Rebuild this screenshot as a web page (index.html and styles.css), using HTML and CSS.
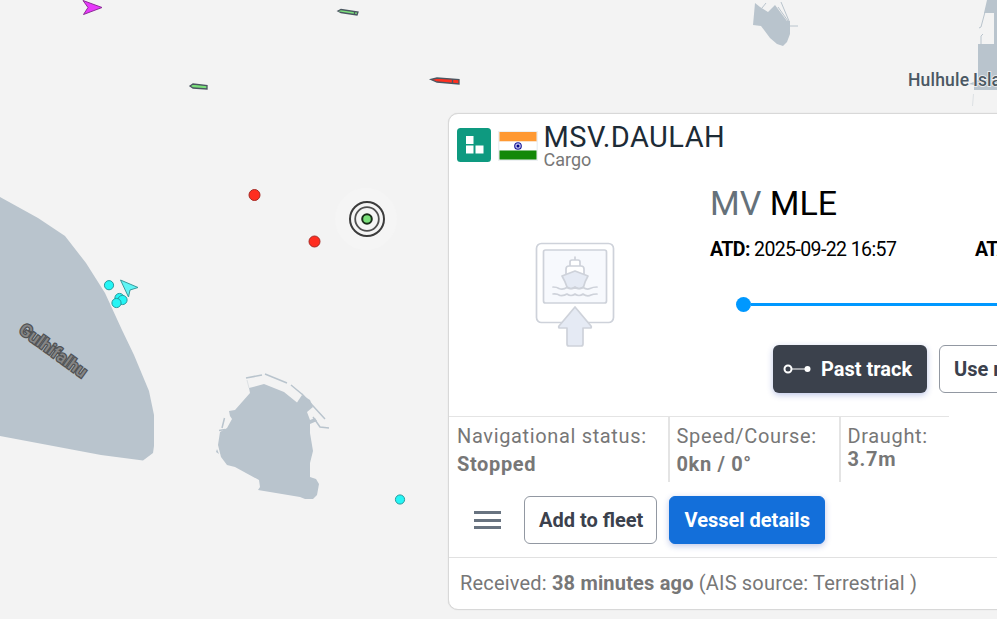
FILE: index.html
```
<!DOCTYPE html>
<html lang="en">
<head>
  <meta charset="utf-8">
  <title>MSV.DAULAH</title>
  <link rel="stylesheet" href="styles.css">
</head>
<body>

  <svg class="map" width="997" height="619" viewBox="0 0 997 619">
    <!-- land -->
    <g class="land">
      <path d="M0 197L38 218L65 236L86 263L105 293L122 330L134 355L149 391L154 415V446L153 453L143 460.500L101 455L0 436Z"/>
      <path d="M249 388L264 384L284 392L297 402.500L302 395L310 400L313 407L307 412L310 420L315 418L317 421L310 424V433L313 451L310 463V477L316 479L319 484L317 495L313 499H305L300 497L258 490L260 487L259 480L235 467L227 465L221 457L218 445L220 432L227 428L232 419L230 416L229 411L235 410L250 393Z"/>
      <path d="M217 449L219 454L216 452Z"/>
      <path d="M755 3L760 7L768 12L775 5L787 21H790V34L787 42L783 46L777 44L770 38L761 26L753 25Z"/>
      <path d="M987 0H997V90H974V85L969 84L978 80V44H994V13H984L987 0Z"/>
    </g>
    <g class="breakwater">
      <path d="M246 378L262 375M265 374L287 383M291 385L303 395M302 394L325 419M313 417L320 427L329 428M224.500 418L222 428M219 430.500L225 429.500"/>
      <path class="thin" d="M778 7L788 21M781 2L789 21M790 26H798M762 8L766 3M985 12L981 27L979 28M983 34L981 36V44"/>
      <path class="faint" d="M247 380L249 388M973.500 94L972.500 106"/>
    </g>

    <!-- place names -->
    <text class="place" x="908" y="85.500" textLength="61">Hulhule</text>
    <text class="place" x="973" y="85.500">Island</text>
    <text class="place-turned" transform="translate(18 332) rotate(36)" textLength="79">Gulhifalhu</text>

    <!-- moving vessels -->
    <path class="arrow magenta" d="M83 .5L102 7.500L83.500 14.500L88 7.500Z"/>
    <path class="arrow cyan" d="M120.500 280L138 287.500L130 290L128.500 297Z"/>
    <g class="hull">
      <path class="green" d="M190 86L193 84L207 85.500V89L193 88Z"/>
      <path class="green" d="M338 11L341 9.500L358 12L357 15L341 12.500Z"/>
      <path class="red" d="M431 79.500L437 78L459 79.500V84L437 82Z"/>
      <path d="M354.500 12V14.500M452.500 79V83.500"/>
    </g>

    <!-- stopped vessels -->
    <g class="dot red">
      <circle cx="254.500" cy="195" r="5.500"/>
      <circle cx="314.500" cy="241.500" r="5.500"/>
    </g>
    <g class="dot cyan">
      <circle cx="109" cy="285.200" r="4.600"/>
      <circle cx="119.500" cy="298" r="4.600"/>
      <circle cx="122.500" cy="300" r="4.600"/>
      <circle cx="116.500" cy="303" r="4.600"/>
      <circle cx="400" cy="499.500" r="4.600"/>
    </g>

    <!-- selected vessel -->
    <g class="selected">
      <circle class="halo" cx="366" cy="219" r="31"/>
      <circle class="ring" cx="367" cy="219" r="17"/>
      <circle class="ring inner" cx="367" cy="219" r="11.800"/>
      <circle class="core" cx="367" cy="219" r="4.800"/>
    </g>
  </svg>

  <div class="card">
    <div class="header">
      <svg class="type-icon" width="34" height="34" viewBox="0 0 34 34">
        <rect width="34" height="34" rx="3.500" fill="#0e9a80"/>
        <path d="M9 8h7.500v8H9zM9 17.500h7.500v8H9zM18.500 17.500h8v8h-8z" fill="#fff"/>
      </svg>
      <svg class="flag" width="40" height="30" viewBox="0 0 40 30">
        <rect width="40" height="30" fill="#edf0f3"/>
        <rect x="1.500" y="1" width="37" height="9.500" fill="#f93"/>
        <rect x="1.500" y="10.500" width="37" height="9" fill="#fff"/>
        <rect x="1.500" y="19.500" width="37" height="9" fill="#138808"/>
        <circle cx="20" cy="15" r="3.300" fill="#c5c5ed" stroke="#1a1a99" stroke-width="1.100"/>
        <circle cx="20" cy="15" r="1.500" fill="#000088"/>
      </svg>
      <div class="vessel">
        <div class="name">MSV.DAULAH</div>
        <div class="type">Cargo</div>
      </div>
    </div>

    <div class="voyage">
      <svg class="photo" width="80" height="106" viewBox="0 0 80 106" fill="none" stroke="#ced2da" stroke-width="1.700" stroke-linejoin="round" stroke-linecap="round">
        <rect x="1.500" y="1.500" width="77" height="79" rx="5" fill="#fff"/>
        <rect x="8.500" y="8" width="63" height="53" rx="2" fill="#f7f9fd"/>
        <path d="M40 15V18M35 24V20Q35 18 37 18H43Q45 18 45 20V24M31 33V27Q31 24 34 24H46Q49 24 49 27V33" fill="#fff"/>
        <path d="M32 45Q30 39 27 34L40 29L53 34Q50 39 48.500 45Q44 48 40 45Q36 48 32 45Z" fill="#e5eaf4"/>
        <path d="M18 45Q22 45 24 46.500Q28 48 32 45.500Q36 48 40 45.500Q44 48 48 45.500Q52 48 55 46.500Q58 45 62 45M18 52Q22 51.500 25 53.500Q29 54 32 52Q36 55 40 52Q44 55 48 52Q52 55 56 53Q58 52 62 52"/>
        <path d="M40 65L56 84Q57 86 55 86H48V102Q48 104 46 104H34Q32 104 32 102V86H25Q23 86 24 84Z" fill="#e5eaf4"/>
      </svg>
      <div class="route">
        <div class="ports"><span>MV</span> MLE</div>
        <div class="times">
          <div class="time"><b>ATD:</b> 2025-09-22 16:57</div>
          <div class="time"><b>ATA:</b> 2025-09-22 20:10</div>
        </div>
        <div class="progress"></div>
        <div class="buttons">
          <div class="btn dark">
            <svg width="28" height="12" viewBox="0 0 28 12" fill="none" stroke="#fff">
              <circle cx="5" cy="6" r="3.500" stroke-width="2"/>
              <path d="M8.500 6H24"/>
              <circle cx="24.500" cy="6" r="3" fill="#fff" stroke="none"/>
            </svg>
            <span class="track-label">Past track</span>
          </div>
          <div class="btn">Use route</div>
        </div>
      </div>
    </div>

    <div class="stats">
      <div class="stat status">
        <div>Navigational status:</div>
        <b>Stopped</b>
      </div>
      <div class="stat speed">
        <div>Speed/Course:</div>
        <b>0kn / 0°</b>
      </div>
      <div class="stat draught">
        <div>Draught:</div>
        <b>3.7m</b>
      </div>
    </div>

    <div class="actions">
      <div class="menu"><i></i><i></i><i></i></div>
      <div class="btn add">Add to fleet</div>
      <div class="btn blue">Vessel details</div>
    </div>

    <div class="footer">Received: <b>38 minutes ago</b> (AIS source: Terrestrial )</div>
  </div>

</body>
</html>
```
FILE: styles.css
```
* {
  box-sizing: border-box;
}

body {
  margin: 0;
  height: 619px;
  position: relative;
  overflow: hidden;
  background: #f3f3f3;
  font-family: Roboto, "Liberation Sans", sans-serif;
}

svg {
  display: block;
  flex: none;
}

/* map */
.land { fill: #b9c4cd; }

.breakwater {
  fill: none;
  stroke: #b9c4cd;
  stroke-width: 1.5;
}

.breakwater .thin { stroke-width: 1; }
.breakwater .faint { stroke: #dde1e4; stroke-width: 1; }

.place {
  font: 500 17.5px Roboto, sans-serif;
  fill: #4b5863;
  stroke: #f3f3f3;
  stroke-width: 1.5px;
  paint-order: stroke;
}

.place-turned {
  font: 500 17px Roboto, sans-serif;
  fill: #858585;
  stroke: #505254;
  stroke-width: 2.5px;
  paint-order: stroke;
}

.arrow { stroke-width: 1; }
.arrow.magenta { fill: #e838fb; stroke: #8d2c98; }
.arrow.cyan { fill: #5ff5f5; stroke: #3a9a9c; }

.hull { stroke: #4b5661; stroke-width: 1.3; }
.hull .green { fill: #7be07b; }
.hull .red { fill: #ff3020; }

.dot.red { fill: #ff2d20; stroke: #a52a25; stroke-width: 1; }
.dot.cyan { fill: #24f5f5; stroke: #279b9d; stroke-width: 1; }

.halo { fill: #f5f5f5; }
.ring { fill: none; stroke: #3c3c3c; stroke-width: 2; }
.ring.inner { stroke: #505050; stroke-width: 1.8; }
.core { fill: #7be07b; stroke: #182c18; stroke-width: 2; }

/* popup card */
.card {
  position: absolute;
  left: 448px;
  top: 113px;
  width: 720px;
  height: 497px;
  display: flex;
  flex-direction: column;
  background: #fff;
  border: 1px solid #d8d8d8;
  border-radius: 10px;
  box-shadow: 0 0 1px #ccc;
}

.header {
  display: flex;
  height: 60px;
  padding: 9px 8px 0;
}

.type-icon { margin-top: 5px; }
.flag { margin: 8px 0 0 7px; }

.vessel { margin-left: 5.5px; }

.name {
  font-size: 29px;
  line-height: 28px;
  color: #1d2b36;
  letter-spacing: 0.45px;
}

.type {
  font-size: 18px;
  line-height: 17px;
  color: #777;
}

.voyage {
  display: flex;
  height: 242px;
}

.photo { margin: 68px 0 0 86px; }

.route {
  flex: 1;
  padding: 9px 0 0 95px;
}

.ports {
  font-size: 34px;
  line-height: 40px;
  color: #000;
}

.ports span { color: #65717a; }

.times {
  display: flex;
  margin-top: 15px;
  font-size: 19.5px;
  line-height: 24px;
  letter-spacing: -0.6px;
  color: #000;
}

.time {
  width: 265px;
  flex: none;
}

.times b { font-weight: 700; }

.progress {
  display: flex;
  align-items: center;
  height: 15px;
  margin: 35px 0 0 25.5px;
}

.progress::before {
  content: "";
  width: 15px;
  height: 15px;
  border-radius: 50%;
  background: #0098ff;
}

.progress::after {
  content: "";
  flex: 1;
  height: 3px;
  background: #0098ff;
}

.buttons {
  display: flex;
  gap: 12px;
  margin: 33px 0 0 63px;
}

.btn {
  display: flex;
  align-items: center;
  height: 48px;
  padding: 0 14px;
  border: 1px solid #9298a2;
  border-radius: 6px;
  background: #fff;
  color: #3b414d;
  font-size: 20px;
  font-weight: 700;
  white-space: nowrap;
}

.btn.dark {
  width: 154px;
  padding: 0 10px;
  gap: 10px;
  border: 0;
  background: #3b414c;
  color: #fff;
  box-shadow: 0 2px 6px rgba(40, 70, 180, 0.3);
}

.btn.blue {
  width: 156px;
  border-color: #136fda;
  background: #136fda;
  color: #fff;
  box-shadow: 0 2px 6px rgba(40, 70, 180, 0.3);
}

.stats {
  display: flex;
  width: 500px;
  height: 66px;
  border-top: 1px solid #e4e4e4;
  color: #777;
  font-size: 20px;
  line-height: 28px;
  letter-spacing: 0.65px;
}

.stat {
  padding: 5px 0 0 8px;
  border-right: 2px solid #e4e4e4;
}

.status { width: 221px; }
.speed { width: 171px; padding-left: 6.5px; }
.draught { border: 0; line-height: 23px; padding: 8px 0 0 6.5px; }

.actions {
  display: flex;
  height: 75px;
  padding: 14px 0 0 25px;
}

.menu {
  display: flex;
  flex-direction: column;
  gap: 4.5px;
  width: 27px;
  margin: 15px 23px 0 0;
}

.menu i {
  height: 3px;
  background: #687380;
}

.btn.add {
  width: 133px;
  margin-right: 12px;
}

.btn.blue { padding: 0 14.5px; }

.footer {
  flex: 1;
  padding: 13px 11px;
  border-top: 1px solid #e1e1e1;
  color: #777;
  font-size: 20px;
  line-height: 24px;
  letter-spacing: 0.18px;
}
```
